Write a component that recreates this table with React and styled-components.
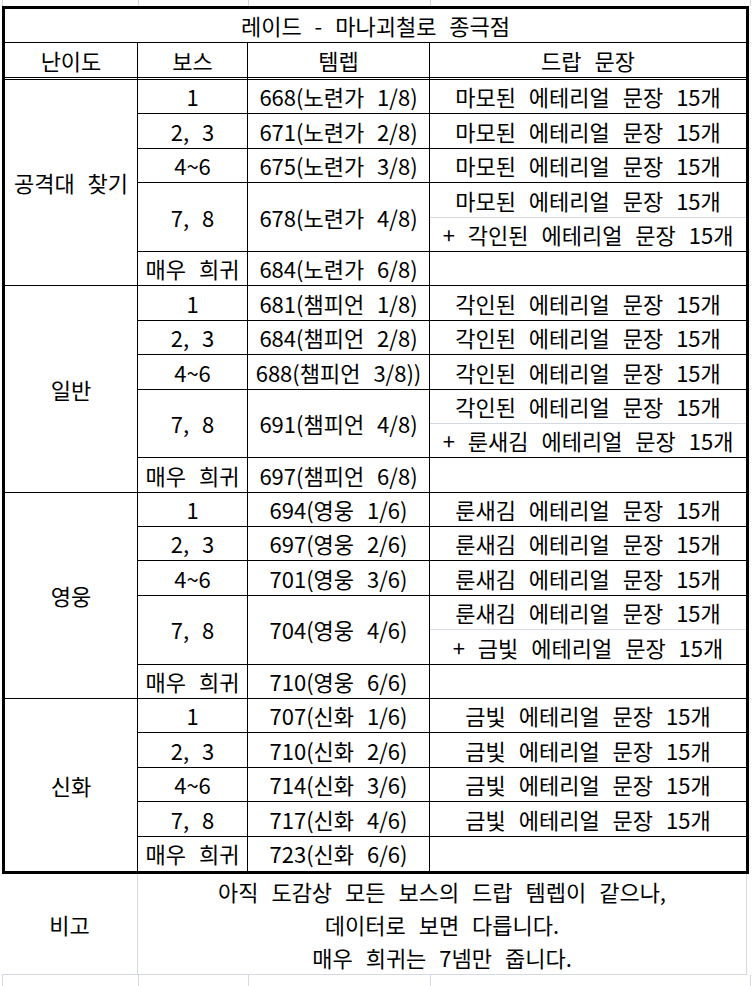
import React from 'react';
import styled, { createGlobalStyle } from 'styled-components';

const GRID = '#d5d9e4';
const LINE = '#000';

const GlobalStyle = createGlobalStyle`
  html, body {
    margin: 0;
    padding: 0;
    background: #fff;
  }
  body {
    font-family: "Noto Sans CJK KR", "Noto Sans", sans-serif;
    color: #000;
    word-spacing: 8px;
  }
`;

const Sheet = styled.div`
  width: 754px;
  height: 986px;
  overflow: hidden;
`;

const EdgeStrip = styled.div`
  display: flex;
  height: ${(p) => p.$h}px;
  margin-left: 2px;
  border-left: 1px solid ${GRID};
`;

const EdgeCell = styled.div`
  width: ${(p) => p.$w}px;
  flex: none;
  box-sizing: border-box;
  border-right: 1px solid ${GRID};
`;

const Table = styled.table`
  margin-left: 2px;
  width: 747px;
  table-layout: fixed;
  border-collapse: separate;
  border-spacing: 0;
  border: 3px solid ${LINE};
  font-size: 22px;
`;

const Row = styled.tr`
  height: ${(p) => p.$h}px;
`;

const Cell = styled.td`
  box-sizing: border-box;
  padding: 0;
  text-align: center;
  vertical-align: middle;
  white-space: nowrap;
  line-height: 1.3;
  border-right: ${(p) => (p.$lastCol ? 'none' : `1px solid ${LINE}`)};
  border-bottom: ${(p) =>
    p.$noBottom ? 'none' : p.$soft ? `1px solid ${GRID}` : `1px solid ${LINE}`};
`;

const TitleCell = styled(Cell)`
  border-right: none;
`;

const HeadCell = styled(Cell)`
  border-bottom: 3px double ${LINE};
`;

const Notes = styled.div`
  display: flex;
  margin-left: 2px;
  width: 745px;
  height: 100px;
  border-bottom: 1px solid ${GRID};
  font-size: 22px;
`;

const NoteLabel = styled.div`
  width: 136px;
  flex: none;
  box-sizing: border-box;
  border-right: 1px solid ${GRID};
  display: flex;
  align-items: center;
  justify-content: center;
`;

const NoteBody = styled.div`
  flex: 1;
  box-sizing: border-box;
  border-right: 1px solid ${GRID};
  display: flex;
  flex-direction: column;
`;

const NoteLine = styled.div`
  flex: 1;
  display: flex;
  align-items: center;
  justify-content: center;
  white-space: nowrap;
`;

const UNIT = 34.4;

const groups = [
  {
    name: '공격대 찾기',
    rows: [
      ['1', '668(노련가 1/8)', ['마모된 에테리얼 문장 15개']],
      ['2, 3', '671(노련가 2/8)', ['마모된 에테리얼 문장 15개']],
      ['4~6', '675(노련가 3/8)', ['마모된 에테리얼 문장 15개']],
      ['7, 8', '678(노련가 4/8)', ['마모된 에테리얼 문장 15개', '+ 각인된 에테리얼 문장 15개']],
      ['매우 희귀', '684(노련가 6/8)', ['']],
    ],
  },
  {
    name: '일반',
    rows: [
      ['1', '681(챔피언 1/8)', ['각인된 에테리얼 문장 15개']],
      ['2, 3', '684(챔피언 2/8)', ['각인된 에테리얼 문장 15개']],
      ['4~6', '688(챔피언 3/8))', ['각인된 에테리얼 문장 15개']],
      ['7, 8', '691(챔피언 4/8)', ['각인된 에테리얼 문장 15개', '+ 룬새김 에테리얼 문장 15개']],
      ['매우 희귀', '697(챔피언 6/8)', ['']],
    ],
  },
  {
    name: '영웅',
    rows: [
      ['1', '694(영웅 1/6)', ['룬새김 에테리얼 문장 15개']],
      ['2, 3', '697(영웅 2/6)', ['룬새김 에테리얼 문장 15개']],
      ['4~6', '701(영웅 3/6)', ['룬새김 에테리얼 문장 15개']],
      ['7, 8', '704(영웅 4/6)', ['룬새김 에테리얼 문장 15개', '+ 금빛 에테리얼 문장 15개']],
      ['매우 희귀', '710(영웅 6/6)', ['']],
    ],
  },
  {
    name: '신화',
    rows: [
      ['1', '707(신화 1/6)', ['금빛 에테리얼 문장 15개']],
      ['2, 3', '710(신화 2/6)', ['금빛 에테리얼 문장 15개']],
      ['4~6', '714(신화 3/6)', ['금빛 에테리얼 문장 15개']],
      ['7, 8', '717(신화 4/6)', ['금빛 에테리얼 문장 15개']],
      ['매우 희귀', '723(신화 6/6)', ['']],
    ],
  },
];

const edgeWidths = [136, 110, 182, 320];

const renderGroups = () => {
  const out = [];
  groups.forEach((group, gi) => {
    const lastGroup = gi === groups.length - 1;
    const units = group.rows.reduce((n, r) => n + r[2].length, 0);
    group.rows.forEach((row, ri) => {
      const [boss, level, drops] = row;
      const lastRow = lastGroup && ri === group.rows.length - 1;
      drops.forEach((drop, di) => {
        const lastSub = di === drops.length - 1;
        out.push(
          <Row key={`${gi}-${ri}-${di}`} $h={UNIT}>
            {ri === 0 && di === 0 && (
              <Cell rowSpan={units} $noBottom={lastGroup}>
                {group.name}
              </Cell>
            )}
            {di === 0 && (
              <>
                <Cell rowSpan={drops.length} $noBottom={lastRow}>
                  {boss}
                </Cell>
                <Cell rowSpan={drops.length} $noBottom={lastRow}>
                  {level}
                </Cell>
              </>
            )}
            <Cell $lastCol $soft={!lastSub} $noBottom={lastRow && lastSub}>
              {drop}
            </Cell>
          </Row>
        );
      });
    });
  });
  return out;
};

const App = () => (
  <Sheet>
    <GlobalStyle />
    <EdgeStrip $h={6}>
      {edgeWidths.map((w, i) => (
        <EdgeCell key={i} $w={w} />
      ))}
    </EdgeStrip>
    <Table>
      <colgroup>
        <col style={{ width: 133 }} />
        <col style={{ width: 110 }} />
        <col style={{ width: 182 }} />
        <col style={{ width: 316 }} />
      </colgroup>
      <thead>
        <Row $h={34}>
          <TitleCell colSpan={4}>레이드 - 마나괴철로 종극점</TitleCell>
        </Row>
        <Row $h={37}>
          <HeadCell>난이도</HeadCell>
          <HeadCell>보스</HeadCell>
          <HeadCell>템렙</HeadCell>
          <HeadCell $lastCol>드랍 문장</HeadCell>
        </Row>
      </thead>
      <tbody>{renderGroups()}</tbody>
    </Table>
    <Notes>
      <NoteLabel>비고</NoteLabel>
      <NoteBody>
        <NoteLine>아직 도감상 모든 보스의 드랍 템렙이 같으나,</NoteLine>
        <NoteLine>데이터로 보면 다릅니다.</NoteLine>
        <NoteLine>매우 희귀는 7넴만 줍니다.</NoteLine>
      </NoteBody>
    </Notes>
    <EdgeStrip $h={13}>
      {edgeWidths.map((w, i) => (
        <EdgeCell key={i} $w={w} />
      ))}
    </EdgeStrip>
  </Sheet>
);

export default App;
